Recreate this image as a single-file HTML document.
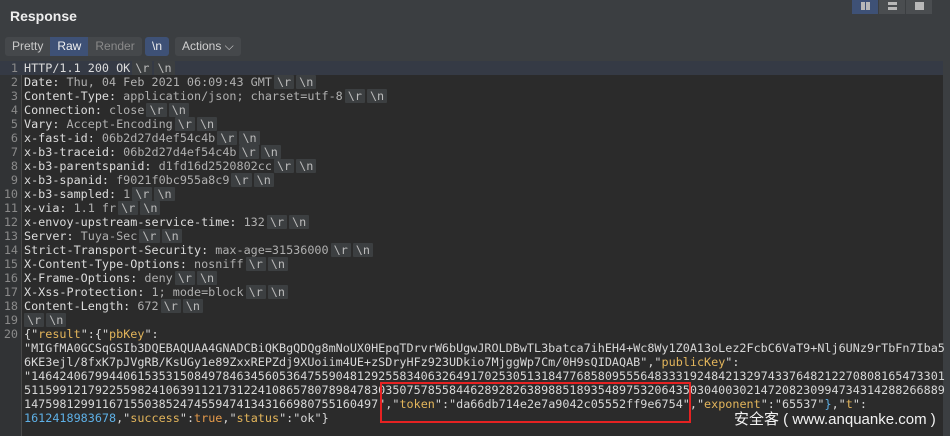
<!DOCTYPE html>
<html><head><meta charset="utf-8"><style>
*{margin:0;padding:0;box-sizing:border-box}
body{width:950px;height:436px;overflow:hidden;background:#3b3e41;font-family:"Liberation Sans",sans-serif;position:relative}
.title{position:absolute;left:10px;top:8px;color:#eee;font-weight:bold;font-size:14px}
.tabs{position:absolute;left:5px;top:37px;height:19px;display:flex;background:#45484b;border-radius:3px;font-size:12px}
.tabs span{padding:2px 7px;line-height:15px;color:#c9c9c9}
.tabs .on{background:#3e5176;color:#f0f0f0}
.tabs .dim{color:#8a8a8a}
.btn{position:absolute;top:37px;height:19px;background:#45484b;border-radius:3px;font-size:12px;color:#d0d0d0;line-height:19px;padding:0 7px}
.vb{position:absolute;top:0;height:14px;width:26px;background:#4a4d50}
.vb i{position:absolute;left:9px;top:2px;width:9px;height:8px;background:#b8b8b8}
.ed{position:absolute;left:0;top:61px;width:943px;height:375px;background:#2b2b2b}
.gut{position:absolute;left:0;top:61px;width:22px;height:375px;background:#313335;border-right:1px solid #4a4a4a}
.code{position:absolute;left:0;top:61px;font-family:"DejaVu Sans Mono",monospace;font-size:11.78px}
.l{height:14px;line-height:14px;white-space:pre;position:relative}
.n{display:inline-block;width:18px;text-align:right;color:#8a8a8a;margin-right:6px}
.k{color:#dcdcdc}.v{color:#b0b0b0}
.e{background:#3c3f41;color:#bbb;padding:0 3px;margin-left:2px;border-radius:1px}
.hl{background:#353a45}
.s{color:#d7d7d7}.y{color:#e3b55b}.b{color:#5eb0e6}.o{color:#e59a4a}
.sb{position:absolute;left:943px;top:61px;width:7px;height:375px;background:#3b3e41}
</style></head><body>
<div class="title">Response</div>
<div class="vb" style="left:852px;background:#3e5176"><i style="width:4px"></i><i style="left:14px;width:4px"></i></div>
<div class="vb" style="left:879px"><i style="height:3px"></i><i style="top:7px;height:3px"></i></div>
<div class="vb" style="left:906px"><i></i></div>
<div class="tabs"><span>Pretty</span><span class="on">Raw</span><span class="dim">Render</span></div>
<div class="btn" style="left:145px;background:#3e5176;color:#eee">\n</div>
<div class="btn" style="left:175px">Actions ⌵</div>
<div class="ed"></div><div class="gut"></div><div class="sb"></div>
<div class="code">
<div class="l hl" style="width:943px"><span class="n">1</span><span class="k">HTTP/1.1 200 OK</span><span class="e">\r</span><span class="e">\n</span></div>
<div class="l"><span class="n">2</span><span class="k">Date: </span><span class="v">Thu, 04 Feb 2021 06:09:43 GMT</span><span class="e">\r</span><span class="e">\n</span></div>
<div class="l"><span class="n">3</span><span class="k">Content-Type: </span><span class="v">application/json; charset=utf-8</span><span class="e">\r</span><span class="e">\n</span></div>
<div class="l"><span class="n">4</span><span class="k">Connection: </span><span class="v">close</span><span class="e">\r</span><span class="e">\n</span></div>
<div class="l"><span class="n">5</span><span class="k">Vary: </span><span class="v">Accept-Encoding</span><span class="e">\r</span><span class="e">\n</span></div>
<div class="l"><span class="n">6</span><span class="k">x-fast-id: </span><span class="v">06b2d27d4ef54c4b</span><span class="e">\r</span><span class="e">\n</span></div>
<div class="l"><span class="n">7</span><span class="k">x-b3-traceid: </span><span class="v">06b2d27d4ef54c4b</span><span class="e">\r</span><span class="e">\n</span></div>
<div class="l"><span class="n">8</span><span class="k">x-b3-parentspanid: </span><span class="v">d1fd16d2520802cc</span><span class="e">\r</span><span class="e">\n</span></div>
<div class="l"><span class="n">9</span><span class="k">x-b3-spanid: </span><span class="v">f9021f0bc955a8c9</span><span class="e">\r</span><span class="e">\n</span></div>
<div class="l"><span class="n">10</span><span class="k">x-b3-sampled: </span><span class="v">1</span><span class="e">\r</span><span class="e">\n</span></div>
<div class="l"><span class="n">11</span><span class="k">x-via: </span><span class="v">1.1 fr</span><span class="e">\r</span><span class="e">\n</span></div>
<div class="l"><span class="n">12</span><span class="k">x-envoy-upstream-service-time: </span><span class="v">132</span><span class="e">\r</span><span class="e">\n</span></div>
<div class="l"><span class="n">13</span><span class="k">Server: </span><span class="v">Tuya-Sec</span><span class="e">\r</span><span class="e">\n</span></div>
<div class="l"><span class="n">14</span><span class="k">Strict-Transport-Security: </span><span class="v">max-age=31536000</span><span class="e">\r</span><span class="e">\n</span></div>
<div class="l"><span class="n">15</span><span class="k">X-Content-Type-Options: </span><span class="v">nosniff</span><span class="e">\r</span><span class="e">\n</span></div>
<div class="l"><span class="n">16</span><span class="k">X-Frame-Options: </span><span class="v">deny</span><span class="e">\r</span><span class="e">\n</span></div>
<div class="l"><span class="n">17</span><span class="k">X-Xss-Protection: </span><span class="v">1; mode=block</span><span class="e">\r</span><span class="e">\n</span></div>
<div class="l"><span class="n">18</span><span class="k">Content-Length: </span><span class="v">672</span><span class="e">\r</span><span class="e">\n</span></div>
<div class="l"><span class="n">19</span><span class="e" style="margin-left:0">\r</span><span class="e">\n</span></div>
<div class="l"><span class="n">20</span><span class="s">{"</span><span class="y">result</span><span class="s">":{"</span><span class="y">pbKey</span><span class="s">":</span></div>
<div class="l"><span class="n"></span><span class="s">"MIGfMA0GCSqGSIb3DQEBAQUAA4GNADCBiQKBgQDQg8mNoUX0HEpqTDrvrW6bUgwJROLDBwTL3batca7ihEH4+Wc8Wy1Z0A13oLez2FcbC6VaT9+Nlj6UNz9rTbFn7Iba5</span></div>
<div class="l"><span class="n"></span><span class="s">6KE3ejl/8fxK7pJVgRB/KsUGy1e89ZxxREPZdj9XUoiim4UE+zSDryHFz923UDkio7MjggWp7Cm/0H9sQIDAQAB","</span><span class="y">publicKey</span><span class="s">":</span></div>
<div class="l"><span class="n"></span><span class="s">"146424067994406153531508497846345605364755904812925583406326491702530513184776858095556483331924842132974337648212270808165473301</span></div>
<div class="l"><span class="n"></span><span class="s">5115991217922559824106391121731224108657807898478303507578558446289282638988518935489753206435030400302147208230994734314288266889</span></div>
<div class="l"><span class="n"></span><span class="s">14759812991167155038524745594741343166980755160497","</span><span class="y">token</span><span class="s">":"da66db714e2e7a9042c05552ff9e6754","</span><span class="y">exponent</span><span class="s">":"65537"</span><span class="b">}</span><span class="s">,"</span><span class="y">t</span><span class="s">":</span></div>
<div class="l"><span class="n"></span><span class="b">1612418983678</span><span class="s">,"</span><span class="y">success</span><span class="s">":</span><span class="o">true</span><span class="s">,"</span><span class="y">status</span><span class="s">":"ok"}</span></div>
</div>
<div style="position:absolute;left:380px;top:382px;width:311px;height:41px;border:2px solid #e52222"></div>
<div style="position:absolute;left:734px;top:408px;color:#f2f2f2;font-size:15px;font-family:'Liberation Sans','Noto Sans CJK SC',sans-serif;white-space:pre">安全客 ( www.anquanke.com )</div>
</body></html>
